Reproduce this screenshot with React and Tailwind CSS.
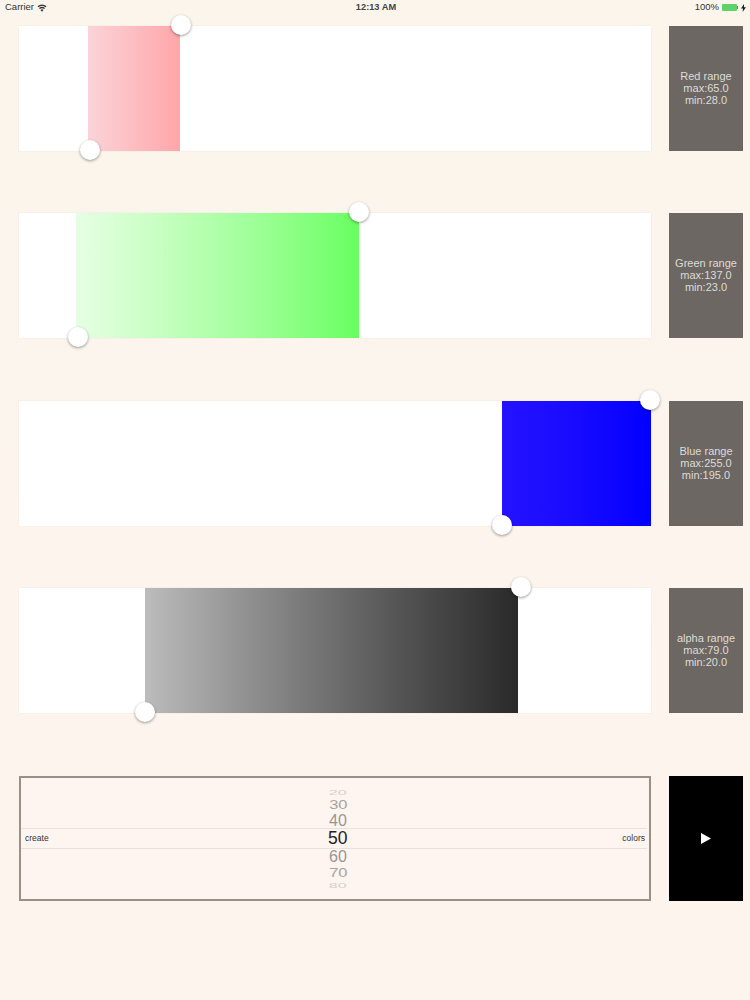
import React from "react";

const font = "font-['Liberation_Sans',Arial,sans-serif]";

const ranges = [
  { label: "Red range", min: 28, max: 65, scale: 255, minX: 71, maxX: 162, fill: "bg-gradient-to-r from-[#fad3d9] to-[#ffa6a9]" },
  { label: "Green range", min: 23, max: 137, scale: 255, minX: 59, maxX: 340, fill: "bg-gradient-to-r from-[#e6ffe4] to-[#66ff5f]" },
  { label: "Blue range", min: 195, max: 255, scale: 255, minX: 483, maxX: 631, fill: "bg-gradient-to-r from-[#2412ff] to-[#0000ff]" },
  { label: "alpha range", min: 20, max: 79, scale: 100, minX: 126, maxX: 502, fill: "bg-gradient-to-r from-[#bcbcbc] to-[#2a2a2a]" },
];

function Thumb({ x, className }) {
  return (
    <div
      className={`absolute w-5 h-5 -ml-[10px] rounded-full bg-white shadow-[0_1px_3px_rgba(0,0,0,0.4)] ${className}`}
      style={{ left: x }}
    />
  );
}

function RangeRow({ r }) {
  return (
    <div className="flex gap-[18px] h-[125px] mb-[62.5px]">
      <div className="relative w-[632px] bg-white shadow-[0_0_1px_rgba(120,100,80,0.2)]">
        <div
          className={`absolute inset-y-0 ${r.fill}`}
          style={{ left: `${(r.min / r.scale) * 100}%`, width: `${((r.max - r.min) / r.scale) * 100}%` }}
        />
        <Thumb x={r.maxX} className="-top-[11px]" />
        <Thumb x={r.minX} className="-bottom-[9px]" />
      </div>
      <div className="w-[74px] pb-[1px] bg-[#6c6762] flex flex-col items-center justify-center text-[11px] leading-[12px] text-[#dedbd8]">
        <span>{r.label}</span>
        <span>max:{r.max}.0</span>
        <span>min:{r.min}.0</span>
      </div>
    </div>
  );
}

function StatusBar() {
  return (
    <div className="flex items-center justify-between h-[15px] pl-[5px] pr-[4px] text-[9.5px] text-[#333]">
      <div className="flex items-center gap-[3px] w-[150px]">
        <span>Carrier</span>
        <svg width="10" height="8" viewBox="0 0 20 16" fill="#333">
          <path d="M10 15.5 13 11.8a4.8 4.8 0 0 0-6 0z" />
          <path d="M5.7 10.2 4 8.1a9.4 9.4 0 0 1 12 0l-1.7 2.1a6.7 6.7 0 0 0-8.6 0z" />
          <path d="M2.8 6.6 1 4.4a14 14 0 0 1 18 0l-1.8 2.2a11.2 11.2 0 0 0-14.4 0z" />
        </svg>
      </div>
      <span className="font-bold text-[9.25px] ml-[1px] text-[#444]">12:13 AM</span>
      <div className="flex items-center justify-end gap-[3px] w-[150px]">
        <span>100%</span>
        <div className="flex items-center">
          <div className="w-[15px] h-[7px] rounded-[1px] bg-[#5fd36a]" />
          <div className="w-[1px] h-[3px] bg-[#777]" />
        </div>
        <svg width="5" height="8" viewBox="0 0 5 8" fill="#222">
          <path d="M3 0 0 4.6h2L1.6 8 5 3.2H3z" />
        </svg>
      </div>
    </div>
  );
}

function Wheel({ value, className }) {
  return <span className={`block text-center leading-none ${className}`}>{value}</span>;
}

function Picker() {
  return (
    <div className="w-[632px] h-[125px] border-2 border-[#9a9088] bg-[#fef5f0] flex flex-col">
      <div className="h-[50px] pl-[6px] flex flex-col items-center justify-end">
        <Wheel value="20" className="text-[14px] h-[9px] mb-[2px] scale-x-[1.15] scale-y-[0.55] text-[#d4cfcb]" />
        <Wheel value="30" className="text-[15px] h-[13px] mb-[3px] scale-x-[1.1] scale-y-[0.8] text-[#a8a3a0]" />
        <Wheel value="40" className="text-[16px] h-[14px] mb-[1px] text-[#9a9693]" />
      </div>
      <div className="relative h-[21px] border-y border-[#e8e1dc] mr-[2px] flex items-center justify-between pl-[4px] pr-[2px] text-[8.5px] text-[#333]">
        <span>create</span>
        <span className="absolute left-[307px] text-[17.5px] leading-none text-[#222]">50</span>
        <span>colors</span>
      </div>
      <div className="flex-1 pl-[6px] flex flex-col items-center">
        <Wheel value="60" className="text-[16px] h-[15px] mb-[1px] text-[#9a9693]" />
        <Wheel value="70" className="text-[15px] h-[13px] mb-[1px] scale-x-[1.1] scale-y-[0.8] text-[#a8a3a0]" />
        <Wheel value="80" className="text-[14px] h-[9px] scale-x-[1.15] scale-y-[0.55] text-[#d4cfcb]" />
      </div>
    </div>
  );
}

export default function App() {
  return (
    <div className={`${font} w-[750px] h-[1000px] overflow-hidden bg-gradient-to-b from-[#fbf5ec] to-[#fef4ee]`}>
      <StatusBar />
      <div className="pl-[19px] pt-[10.75px]">
        {ranges.map((r) => (
          <RangeRow key={r.label} r={r} />
        ))}
        <div className="flex gap-[18px]">
          <Picker />
          <button className="w-[74px] h-[125px] bg-black flex items-center justify-center">
            <svg width="10" height="11" viewBox="0 0 10 11" fill="#fff">
              <path d="M0 0 10 5.5 0 11z" />
            </svg>
          </button>
        </div>
      </div>
    </div>
  );
}
